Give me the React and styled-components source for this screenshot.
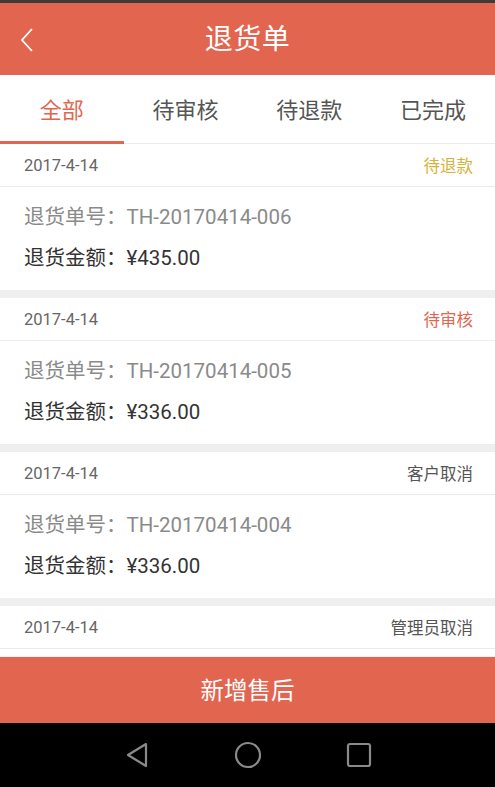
import React from 'react'
import styled, { createGlobalStyle } from 'styled-components'

const Global = createGlobalStyle`
  html, body { margin: 0; padding: 0; }
  body {
    font-family: Roboto, "Noto Sans CJK SC", "Noto Sans", sans-serif;
    background: #000;
  }
`

const Colors = {
  primary: '#E1654F',
  gold: '#D5B23C',
  text: '#333333',
  sub: '#666666',
  light: '#8a8a8a',
  line: '#ececec',
  gap: '#efefef'
}

const Screen = styled.div`
  width: 495px;
  height: 787px;
  display: flex;
  flex-direction: column;
  overflow: hidden;
  background: ${Colors.gap};
`
const StatusStrip = styled.div`
  height: 3px;
  background: #3d3a38;
  flex-shrink: 0;
`
const Header = styled.div`
  height: 72px;
  flex-shrink: 0;
  background: ${Colors.primary};
  display: flex;
  align-items: center;
  justify-content: center;
  position: relative;
  color: #fff;
`
const Title = styled.div`
  font-size: 28px;
  letter-spacing: 0.5px;
  padding-bottom: 4px;
`
const Back = styled.div`
  position: absolute;
  left: 18px;
  top: 23px;
  display: flex;
`
const Tabs = styled.div`
  height: 68px;
  flex-shrink: 0;
  background: #fff;
  display: grid;
  grid-template-columns: repeat(4, 1fr);
  border-bottom: 1px solid ${Colors.line};
`
const Tab = styled.div`
  display: flex;
  align-items: center;
  justify-content: center;
  font-size: 22px;
  color: ${p => (p.active ? Colors.primary : '#555')};
  border-bottom: 3px solid ${p => (p.active ? Colors.primary : 'transparent')};
  margin-bottom: -1px;
`
const List = styled.div`
  flex: 1;
  overflow: hidden;
  display: flex;
  flex-direction: column;
  gap: 8px;
`
const Card = styled.div`
  background: #fff;
  flex-shrink: 0;
`
const CardHead = styled.div`
  height: 42px;
  padding: 0 22px 0 24px;
  display: flex;
  align-items: center;
  justify-content: space-between;
  border-bottom: 1px solid ${Colors.line};
  font-size: 16.5px;
`
const DateText = styled.span`
  color: ${Colors.sub};
`
const Status = styled.span`
  font-size: 16.5px;
  color: ${p => p.color};
`
const CardBody = styled.div`
  height: 103px;
  padding: 0 24px 2px;
  box-sizing: border-box;
  display: flex;
  flex-direction: column;
  justify-content: center;
  gap: 17px;
  font-size: 20.5px;
`
const Line = styled.div`
  color: ${p => (p.strong ? Colors.text : Colors.light)};
  line-height: 24px;
`
const AddButton = styled.div`
  height: 67px;
  flex-shrink: 0;
  background: ${Colors.primary};
  color: #fff;
  font-size: 23.5px;
  display: flex;
  align-items: center;
  justify-content: center;
  border-top: 1px solid #f3f3f3;
  box-sizing: border-box;
  padding-bottom: 3px;
`
const NavBar = styled.div`
  height: 64px;
  flex-shrink: 0;
  background: #000;
  display: grid;
  grid-template-columns: repeat(3, 111px);
  justify-content: center;
  align-items: center;
  justify-items: center;
`

const statusColor = {
  '待退款': Colors.gold,
  '待审核': Colors.primary,
  '客户取消': '#555',
  '管理员取消': '#555'
}

const orders = [
  { date: '2017-4-14', status: '待退款', no: 'TH-20170414-006', amount: '¥435.00' },
  { date: '2017-4-14', status: '待审核', no: 'TH-20170414-005', amount: '¥336.00' },
  { date: '2017-4-14', status: '客户取消', no: 'TH-20170414-004', amount: '¥336.00' },
  { date: '2017-4-14', status: '管理员取消', no: 'TH-20170414-003', amount: '¥336.00' }
]

const tabs = ['全部', '待审核', '待退款', '已完成']

export default function App() {
  return (
    <Screen>
      <Global />
      <StatusStrip />
      <Header>
        <Back>
          <svg width="18" height="28" viewBox="0 0 18 28">
            <path d="M14 3 L4 14 L14 25" fill="none" stroke="#fff" strokeWidth="1.8" />
          </svg>
        </Back>
        <Title>退货单</Title>
      </Header>
      <Tabs>
        {tabs.map((t, i) => <Tab key={t} active={i === 0}>{t}</Tab>)}
      </Tabs>
      <List>
        {orders.map(o => (
          <Card key={o.no}>
            <CardHead>
              <DateText>{o.date}</DateText>
              <Status color={statusColor[o.status]}>{o.status}</Status>
            </CardHead>
            <CardBody>
              <Line>退货单号：{o.no}</Line>
              <Line strong>退货金额：{o.amount}</Line>
            </CardBody>
          </Card>
        ))}
      </List>
      <AddButton>新增售后</AddButton>
      <NavBar>
        <svg width="26" height="28" viewBox="0 0 26 28">
          <path d="M22 3 L4 14 L22 25 Z" fill="none" stroke="#8a8a8a" strokeWidth="2.2" strokeLinejoin="round" />
        </svg>
        <svg width="28" height="28" viewBox="0 0 28 28">
          <circle cx="14" cy="14" r="12" fill="none" stroke="#8a8a8a" strokeWidth="2.2" />
        </svg>
        <svg width="26" height="26" viewBox="0 0 26 26">
          <rect x="2" y="2" width="22" height="22" rx="2" fill="none" stroke="#8a8a8a" strokeWidth="2.2" />
        </svg>
      </NavBar>
    </Screen>
  )
}
